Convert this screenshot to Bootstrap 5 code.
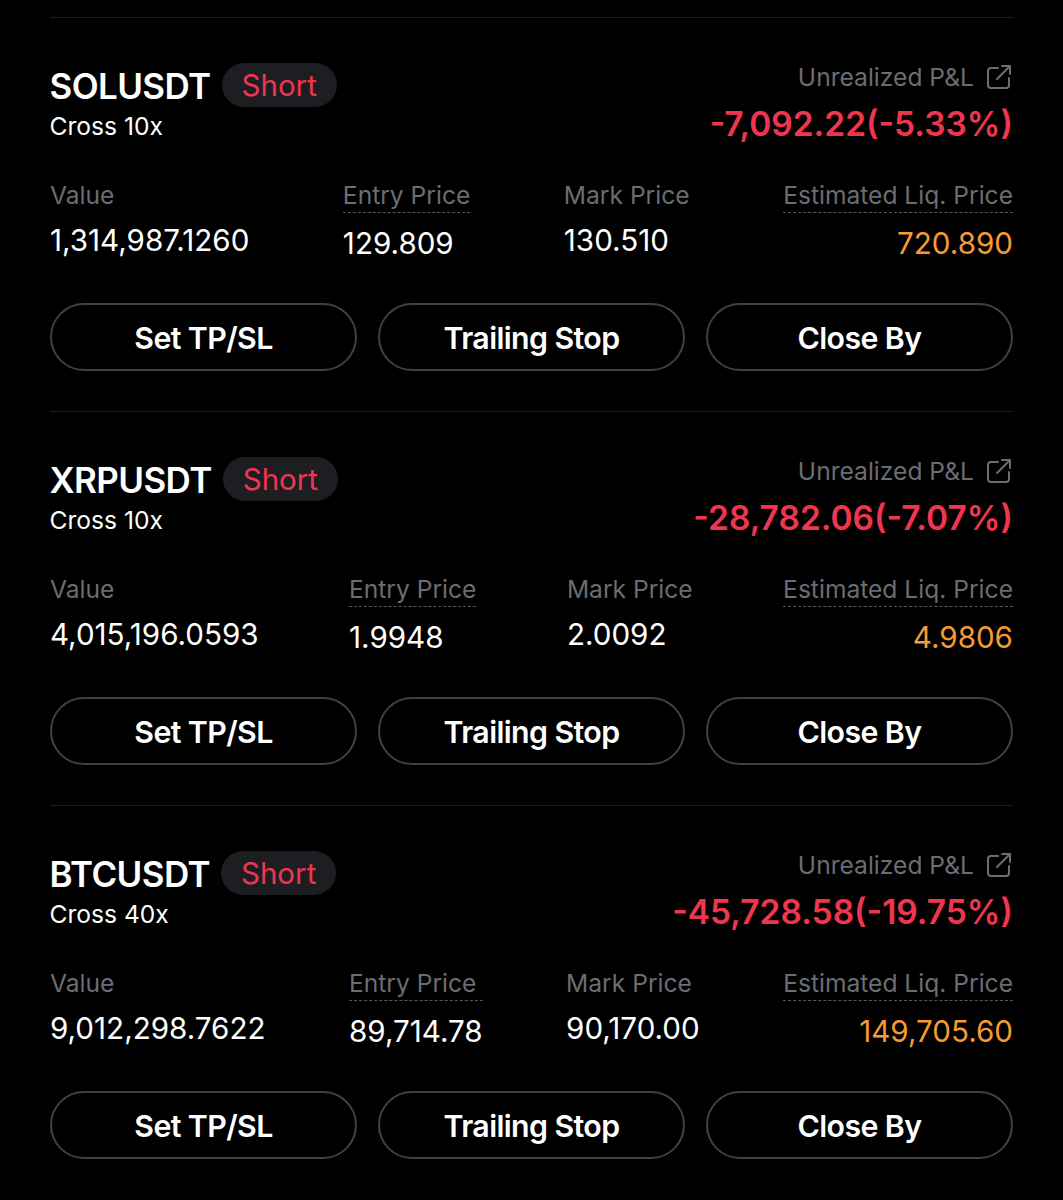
<!DOCTYPE html>
<html lang="en">
<head>
  <meta charset="UTF-8">
  <title>Positions</title>
  <link href="https://cdn.jsdelivr.net/npm/bootstrap@5.3.3/dist/css/bootstrap.min.css" rel="stylesheet">
  <style>
    body {
      background: #000;
      color: #fff;
      font-family: Inter, "Liberation Sans", sans-serif;
      padding: 17px 50px 0;
    }

    .pos-item {
      border-top: 1px solid #1e1f22;
      height: 394px;
      padding-top: 46px;
    }

    .pos-symbol {
      font-size: 35px;
      font-weight: 600;
      line-height: 44px;
      letter-spacing: -0.6px;
      margin-left: -0.5px;
    }

    .side-pill {
      background: #1c1e22;
      color: #f0364f;
      font-size: 29.5px;
      line-height: 44px;
      height: 44px;
      padding: 0 20px;
      border-radius: 22px;
      margin-left: 11px;
      margin-top: -2px;
    }

    .pos-margin {
      font-size: 24.6px;
      line-height: 30px;
      margin-top: 3px;
      margin-left: -0.5px;
    }

    .muted-label {
      color: #6b6d72;
      font-size: 24.6px;
      line-height: 30px;
    }

    .pnl-label {
      line-height: 26px;
    }

    .pnl-icon {
      width: 26px;
      height: 26px;
      margin-left: 12px;
      margin-right: 1px;
    }

    .pnl-value {
      color: #f0364f;
      font-size: 33.5px;
      font-weight: 600;
      line-height: 44px;
      margin-top: 12px;
    }

    .stats-row {
      margin-top: 34px;
    }

    .dotted-label {
      border-bottom: 1px dashed #55575b;
      padding-bottom: 2px;
    }

    .stat-value {
      font-size: 29.6px;
      line-height: 36px;
      margin-top: 12px;
    }

    .liq-value {
      color: #f59b32;
    }

    .action-row {
      margin-top: 42px;
      gap: 21px;
    }

    .action-btn {
      flex: 1 1 0;
      height: 68px;
      border: 2px solid #3f4145;
      border-radius: 34px;
      background: transparent;
      color: #fff;
      font-size: 30.3px;
      font-weight: 600;
      letter-spacing: -0.6px;
      padding: 4px 0 0;
    }

    .action-btn:hover {
      color: #fff;
      border-color: #3f4145;
    }
  </style>
</head>
<body>

<div id="positions"></div>

<script>
  const positions = [
    { symbol: "SOLUSDT", margin: "Cross 10x", pnl: "-7,092.22(-5.33%)", value: "1,314,987.1260", entry: "129.809", mark: "130.510", liq: "720.890" },
    { symbol: "XRPUSDT", margin: "Cross 10x", pnl: "-28,782.06(-7.07%)", value: "4,015,196.0593", entry: "1.9948", mark: "2.0092", liq: "4.9806" },
    { symbol: "BTCUSDT", margin: "Cross 40x", pnl: "-45,728.58(-19.75%)", value: "9,012,298.7622", entry: "89,714.78", mark: "90,170.00", liq: "149,705.60" }
  ];

  document.getElementById("positions").innerHTML = positions.map(p => `
    <div class="pos-item">
      <div class="d-flex justify-content-between">
        <div>
          <div class="d-flex align-items-center">
            <span class="pos-symbol">${p.symbol}</span>
            <span class="side-pill">Short</span>
          </div>
          <div class="pos-margin">${p.margin}</div>
        </div>
        <div class="text-end">
          <div class="muted-label pnl-label d-flex align-items-center justify-content-end">
            Unrealized P&amp;L
            <svg class="pnl-icon" viewBox="0 0 26 26" fill="none" stroke="#6b6d72" stroke-width="2" stroke-linecap="round" stroke-linejoin="round">
              <path d="M12 4H5a3 3 0 0 0-3 3v14a3 3 0 0 0 3 3h15a3 3 0 0 0 3-3v-7"/>
              <path d="M11 15 24 2M16 2h8v8"/>
            </svg>
          </div>
          <div class="pnl-value">${p.pnl}</div>
        </div>
      </div>
      <div class="stats-row d-flex justify-content-between">
        <div>
          <div class="muted-label">Value</div>
          <div class="stat-value">${p.value}</div>
        </div>
        <div>
          <div class="muted-label dotted-label">Entry Price</div>
          <div class="stat-value">${p.entry}</div>
        </div>
        <div>
          <div class="muted-label">Mark Price</div>
          <div class="stat-value">${p.mark}</div>
        </div>
        <div class="text-end">
          <div class="muted-label dotted-label">Estimated Liq. Price</div>
          <div class="stat-value liq-value">${p.liq}</div>
        </div>
      </div>
      <div class="action-row d-flex">
        <button type="button" class="btn action-btn">Set TP/SL</button>
        <button type="button" class="btn action-btn">Trailing Stop</button>
        <button type="button" class="btn action-btn">Close By</button>
      </div>
    </div>`).join("");
</script>

<script src="https://cdn.jsdelivr.net/npm/bootstrap@5.3.3/dist/js/bootstrap.bundle.min.js"></script>
</body>
</html>
